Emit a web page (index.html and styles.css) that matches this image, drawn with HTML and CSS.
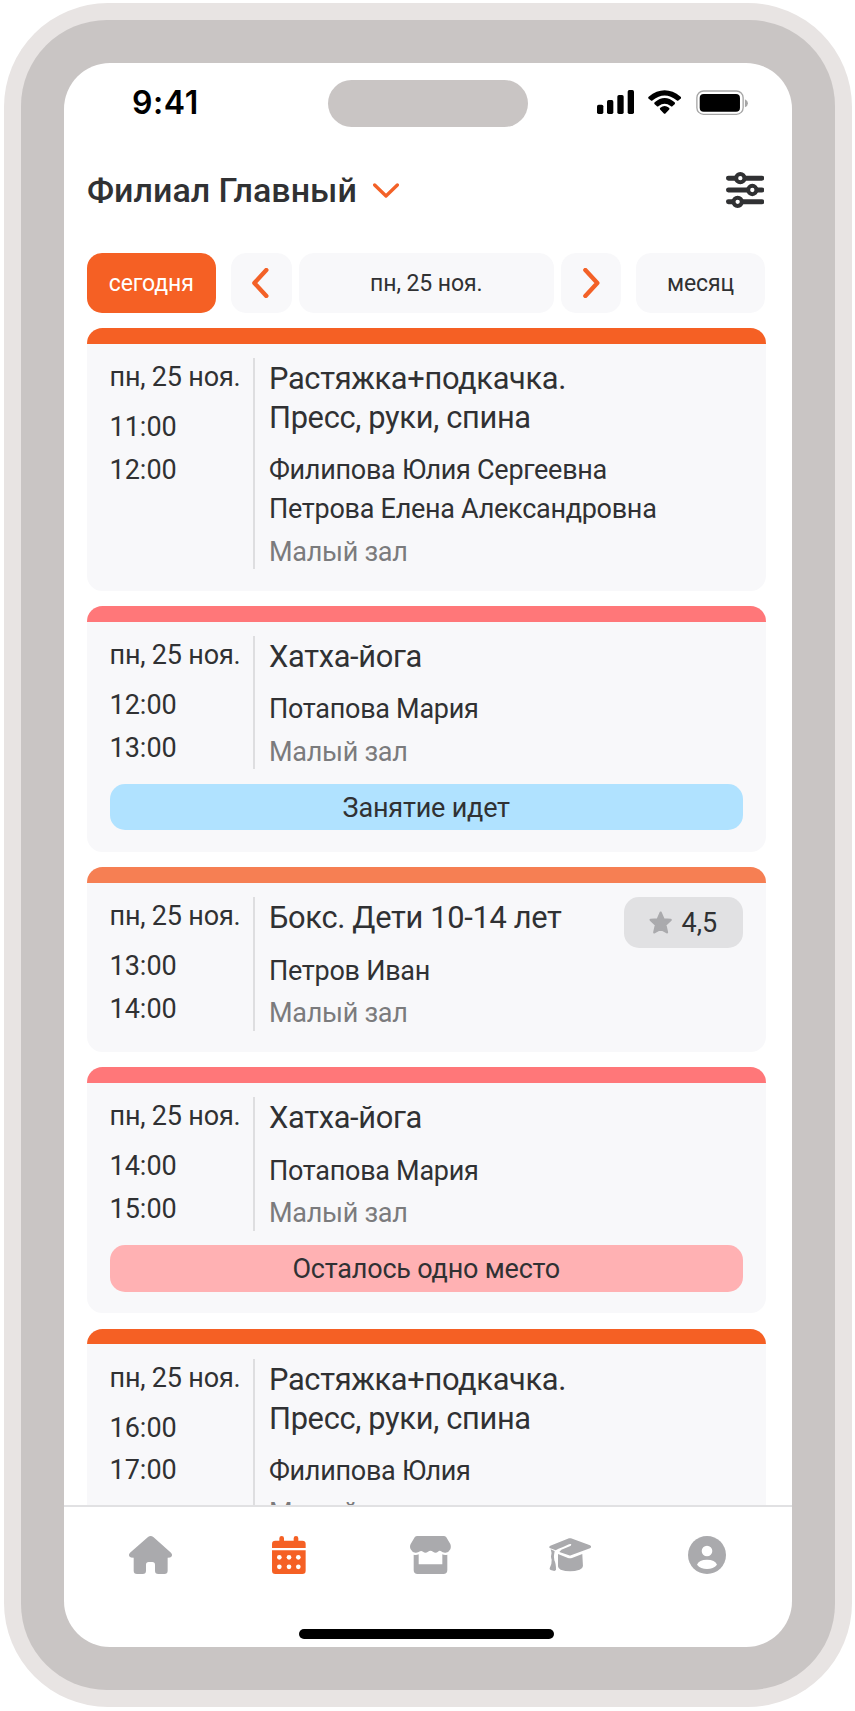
FILE: index.html
```html
<!DOCTYPE html>
<html lang="ru">
<head>
<meta charset="utf-8">
<title>Расписание</title>
<link rel="stylesheet" href="styles.css">
</head>
<body>
<div class="phone">
<div class="bezel">
<div class="screen">
  <div class="status">
    <span class="clock">9:41</span>
    <span class="island"></span>
    <div class="indicators">
      <svg class="signal" viewBox="515 270 111 72"><rect x="515" y="314" width="19" height="28" rx="5"/><rect x="545" y="300" width="19" height="42" rx="5"/><rect x="576" y="285" width="19" height="57" rx="5"/><rect x="607" y="270" width="19" height="72" rx="5"/></svg>
      <svg class="wifi" viewBox="669 270 100 73"><path d="M671 290Q719 252 767 290Q770 293 767 296L761 301Q758 304 755 301Q719 272 683 301Q680 304 677 301L671 296Q668 293 671 290Z"/><path d="M689 307Q719 281 749 307Q752 310 749 313L743 318Q740 321 737 318Q719 304 701 318Q698 321 695 318L689 313Q686 310 689 307Z"/><path d="M706 323Q719 313 732 323Q735 326 732 329L722 340Q719 343 716 340L706 329Q703 326 706 323Z"/></svg>
      <svg class="battery" viewBox="813 270 156 76"><rect x="815.5" y="273" width="139" height="70" rx="20" fill="none" stroke="#a6a6a6" stroke-width="4"/><rect x="824" y="282" width="121" height="53" rx="12"/><path d="M960 298Q969 302 969 310T960 322Z" fill="#a6a6a6"/></svg>
    </div>
  </div>
  <header class="head">
    <h1 class="branch">Филиал Главный</h1>
    <svg class="chevron-down" viewBox="0 0 78 45"><path d="M5 6L39 39L73 6"/></svg>
    <svg class="filters" viewBox="902 516 115 108"><path d="M909.500 534.500H1009.500M909.500 570H1009.500M909.500 605.500H1009.500"/><circle cx="945" cy="534.500" r="12.500"/><circle cx="981" cy="570" r="12.500"/><circle cx="937" cy="605.500" r="12.500"/></svg>
  </header>
  <div class="days">
    <button class="btn btn-active">сегодня</button>
    <button class="btn btn-prev"><svg class="arrow" viewBox="0 0 50 90"><path d="M43 6L7 45L43 84"/></svg></button>
    <button class="btn btn-date">пн, 25 ноя.</button>
    <button class="btn btn-next"><svg class="arrow" viewBox="0 0 50 90"><path d="M7 6L43 45L7 84"/></svg></button>
    <button class="btn btn-month">месяц</button>
  </div>
  <main class="list">
    <article class="card orange">
      <div class="row">
        <div class="when"><div class="date">пн, 25 ноя.</div><div class="time">11:00</div><div class="time">12:00</div></div>
        <div class="what"><h2 class="title">Растяжка+подкачка.<br>Пресс, руки, спина</h2><div class="coach">Филипова Юлия Сергеевна</div><div class="coach">Петрова Елена Александровна</div><div class="hall">Малый зал</div></div>
      </div>
    </article>
    <article class="card pink">
      <div class="row">
        <div class="when"><div class="date">пн, 25 ноя.</div><div class="time">12:00</div><div class="time">13:00</div></div>
        <div class="what"><h2 class="title">Хатха-йога</h2><div class="coach">Потапова Мария</div><div class="hall">Малый зал</div></div>
      </div>
      <div class="pill pill-live">Занятие идет</div>
    </article>
    <article class="card coral">
      <div class="row">
        <div class="when"><div class="date">пн, 25 ноя.</div><div class="time">13:00</div><div class="time">14:00</div></div>
        <div class="what"><h2 class="title">Бокс. Дети 10-14 лет</h2><div class="coach">Петров Иван</div><div class="hall">Малый зал</div></div>
        <div class="rating"><svg class="star" viewBox="0 0 70 70"><path d="M35 5L43.500 25L65 26.500L49 41.500L54 64L35 53L16 64L21 41.500L5 26.500L26.500 25Z"/></svg>4,5</div>
      </div>
    </article>
    <article class="card pink">
      <div class="row">
        <div class="when"><div class="date">пн, 25 ноя.</div><div class="time">14:00</div><div class="time">15:00</div></div>
        <div class="what"><h2 class="title">Хатха-йога</h2><div class="coach">Потапова Мария</div><div class="hall">Малый зал</div></div>
      </div>
      <div class="pill pill-last">Осталось одно место</div>
    </article>
    <article class="card orange">
      <div class="row">
        <div class="when"><div class="date">пн, 25 ноя.</div><div class="time">16:00</div><div class="time">17:00</div></div>
        <div class="what"><h2 class="title">Растяжка+подкачка.<br>Пресс, руки, спина</h2><div class="coach">Филипова Юлия</div><div class="hall">Малый зал</div></div>
      </div>
    </article>
  </main>
  <nav class="tabs">
    <svg class="tab tab-home" viewBox="205 708 129 115"><path d="M262 711Q270 705 278 711L331 758Q337 765 332 770Q330 773 321 773V812Q321 822 311 822H293Q283 822 283 812V794Q283 786 275 786H264Q256 786 256 794V812Q256 822 246 822H229Q219 822 219 812V773Q209 773 207 770Q202 765 208 758Z"/></svg>
    <svg class="tab tab-cal" viewBox="637 708 102 115"><path d="M637 744V732Q637 722 647 722H659V715Q659 708 666 708T673 715V722H702V715Q702 708 709 708T716 715V722H728Q738 722 738 732V744Z"/><path d="M637 751H738V812Q738 822 728 822H647Q637 822 637 812Z"/><g fill="#fff"><circle cx="659" cy="772" r="7"/><circle cx="688" cy="772" r="7"/><circle cx="716" cy="772" r="7"/><circle cx="659" cy="800.500" r="7"/><circle cx="688" cy="800.500" r="7"/><circle cx="716" cy="800.500" r="7"/></g></svg>
    <svg class="tab tab-shop" viewBox="1050 708 123 115"><path d="M1072 708H1151Q1156 708 1159 712L1171 732Q1174 740 1171 748Q1167 757 1157 758Q1149 759 1142 753Q1138 751 1134 755Q1127 761 1119 755Q1111 750 1104 755Q1096 761 1089 755Q1084 751 1080 754Q1073 759 1066 758Q1056 757 1052 748Q1048 740 1052 732L1064 712Q1067 708 1072 708Z"/><path d="M1061 764Q1069 766 1076 763V793H1147V763Q1154 766 1162 764V810Q1162 822 1150 822H1073Q1061 822 1061 810Z"/></svg>
    <svg class="tab tab-cap" viewBox="372 713 127 101"><path d="M432 714Q435 713 438 714L495 735Q502 739 495 744L438 765Q435 766 432 765L403 755Q407 748 420 744L436 737Q440 734 438 731Q435 730 432 732L414 740Q398 746 392 750L376 744Q369 740 376 736Z"/><path d="M377 747L389 752Q385 767 388 780Q393 789 393 808Q392 811 388 812L377 809Q373 808 374 804Q381 792 380 778Q378 774 378 768Q382 759 377 747Z"/><path d="M399 761L429 773Q435 775 441 773L472 761L474 797Q474 803 464 808Q435 818 407 808Q399 803 399 798Z"/></svg>
    <svg class="tab tab-user" viewBox="0 0 114 114"><circle cx="57" cy="57" r="57"/><circle cx="57" cy="45" r="16" fill="#fff"/><path d="M27 86Q33 71 57 71T87 86Q76 99 57 99T27 86Z" fill="#fff"/></svg>
  </nav>
  <div class="home-bar"></div>
</div>
</div>
</div>
</body>
</html>
```
FILE: styles.css
```css
* { box-sizing: border-box; }
body { margin: 0; background: #fff; color: #303133; font-family: Roboto, "Noto Sans", sans-serif; }
svg { display: block; flex: none; }
h1, h2 { margin: 0; }

.phone { width: 848px; height: 1704px; margin: 3px 0 0 4px; padding: 17px; border-radius: 104px; background: #e8e4e3; }
.bezel { height: 1670px; padding: 43px; border-radius: 86px; background: #c9c5c4; }
.screen { display: flex; flex-direction: column; height: 1584px; border-radius: 46px; background: #fff; overflow: hidden; }

.status { display: flex; height: 89px; padding: 17px 44px 0 68px; align-items: flex-start; flex: none; }
.clock { width: 196px; padding-top: 4px; font: 600 32px/38px Inter, sans-serif; letter-spacing: 0.6px; color: #000; }
.island { width: 200px; height: 46.500px; border-radius: 24px; background: #c9c5c4; }
.indicators { display: flex; margin-left: auto; padding-top: 10px; }
.signal { width: 37px; height: 24px; }
.wifi { width: 33.300px; height: 24.300px; margin-left: 14px; }
.battery { width: 52px; height: 25.300px; margin-left: 15px; }

.head { display: flex; height: 76px; padding: 0 28px 0 23px; align-items: center; flex: none; }
.branch { font-size: 34px; font-weight: 500; line-height: 40px; letter-spacing: 0; }
.chevron-down { width: 26px; height: 15px; margin-left: 16px; }
.chevron-down path, .arrow path { fill: none; stroke: #f36127; stroke-width: 10; stroke-linecap: round; stroke-linejoin: round; }
.filters { width: 38.300px; height: 36px; margin-left: auto; fill: #fff; stroke: #303133; stroke-width: 15; stroke-linecap: round; }
.filters circle { stroke-width: 12; }

.days { display: flex; height: 60.500px; margin: 24.500px 26px 0 22.500px; flex: none; }
.btn { display: flex; align-items: center; justify-content: center; padding: 1px 0 0; border: 0; border-radius: 15px; background: #f8f8fa; color: #303133; font: 400 23px/27px Roboto, sans-serif; letter-spacing: -0.1px; }
.btn-active { width: 129.500px; margin-right: 15px; background: #f56024; color: #fff; }
.btn-prev { width: 61px; margin-right: 7px; padding: 0 2.500px 0 0; }
.btn-date { width: 254.500px; margin-right: 7.500px; }
.btn-next { width: 60px; margin-right: 15px; padding: 0 0 0 1px; }
.btn-month { width: 129px; }
.arrow { width: 16.700px; height: 30px; }
.arrow path { stroke-width: 13; }

.list { display: flex; flex-direction: column; gap: 15.200px; height: 1177px; margin: 15px 26.500px 0 22.500px; overflow: hidden; flex: none; }
.card { flex: none; padding-bottom: 21.700px; border-radius: 15.500px; overflow: hidden; background: #f8f8fa; }
.card::before { content: ""; display: block; height: 15.500px; }
.orange::before { background: #f56024; }
.pink::before { background: #ff7779; }
.coral::before { background: #f67f53; }
.row { display: flex; margin: 14.500px 22.500px 0 23px; }
.when { width: 143.500px; flex: none; font-size: 27px; line-height: 36px; padding-top: 1px; }
.date { margin-bottom: 14px; letter-spacing: -0.200px; }
.time + .time { margin-top: 6.700px; }
.what { flex: 1; padding: 1px 0 0 14px; border-left: 2px solid #dedee0; font-size: 27px; line-height: 39px; letter-spacing: -0.280px; }
.title { margin-bottom: 14.300px; font-size: 30.800px; font-weight: 400; line-height: 39px; letter-spacing: -0.320px; }
.hall { margin-top: 5.400px; line-height: 34.500px; color: #7b7b7d; }
.rating { display: flex; align-items: center; justify-content: center; gap: 9px; width: 119.500px; height: 50.300px; padding-top: 1px; border-radius: 15px; background: #e1e1e3; font-size: 27px; flex: none; }
.star { width: 23.300px; height: 23.300px; fill: #aaaaad; stroke: #aaaaad; stroke-width: 7; stroke-linejoin: round; }
.pill { height: 46.800px; margin: 14.400px 22.500px 0 23px; border-radius: 15px; font-size: 27px; line-height: 48px; text-align: center; letter-spacing: -0.200px; }
.pill-live { background: #b0e2ff; }
.pill-last { background: #ffb1b3; }

.tabs { display: grid; grid-template-columns: 140px 138px 144.600px 134.800px 138.600px; justify-items: center; align-items: center; height: 98.500px; padding: 0 0 0 16px; border-top: 2px solid #e1e1e3; flex: none; }
.tab { fill: #aaaaad; }
.tab-home { width: 43px; height: 38.300px; }
.tab-cal { width: 34px; height: 38.300px; fill: #f56024; }
.tab-shop { width: 41px; height: 38.300px; }
.tab-cap { width: 42.300px; height: 33.700px; }
.tab-user { width: 38px; height: 38px; }
.home-bar { width: 255px; height: 10px; margin: 25px 0 0 235px; border-radius: 5px; background: #000; flex: none; }
```
